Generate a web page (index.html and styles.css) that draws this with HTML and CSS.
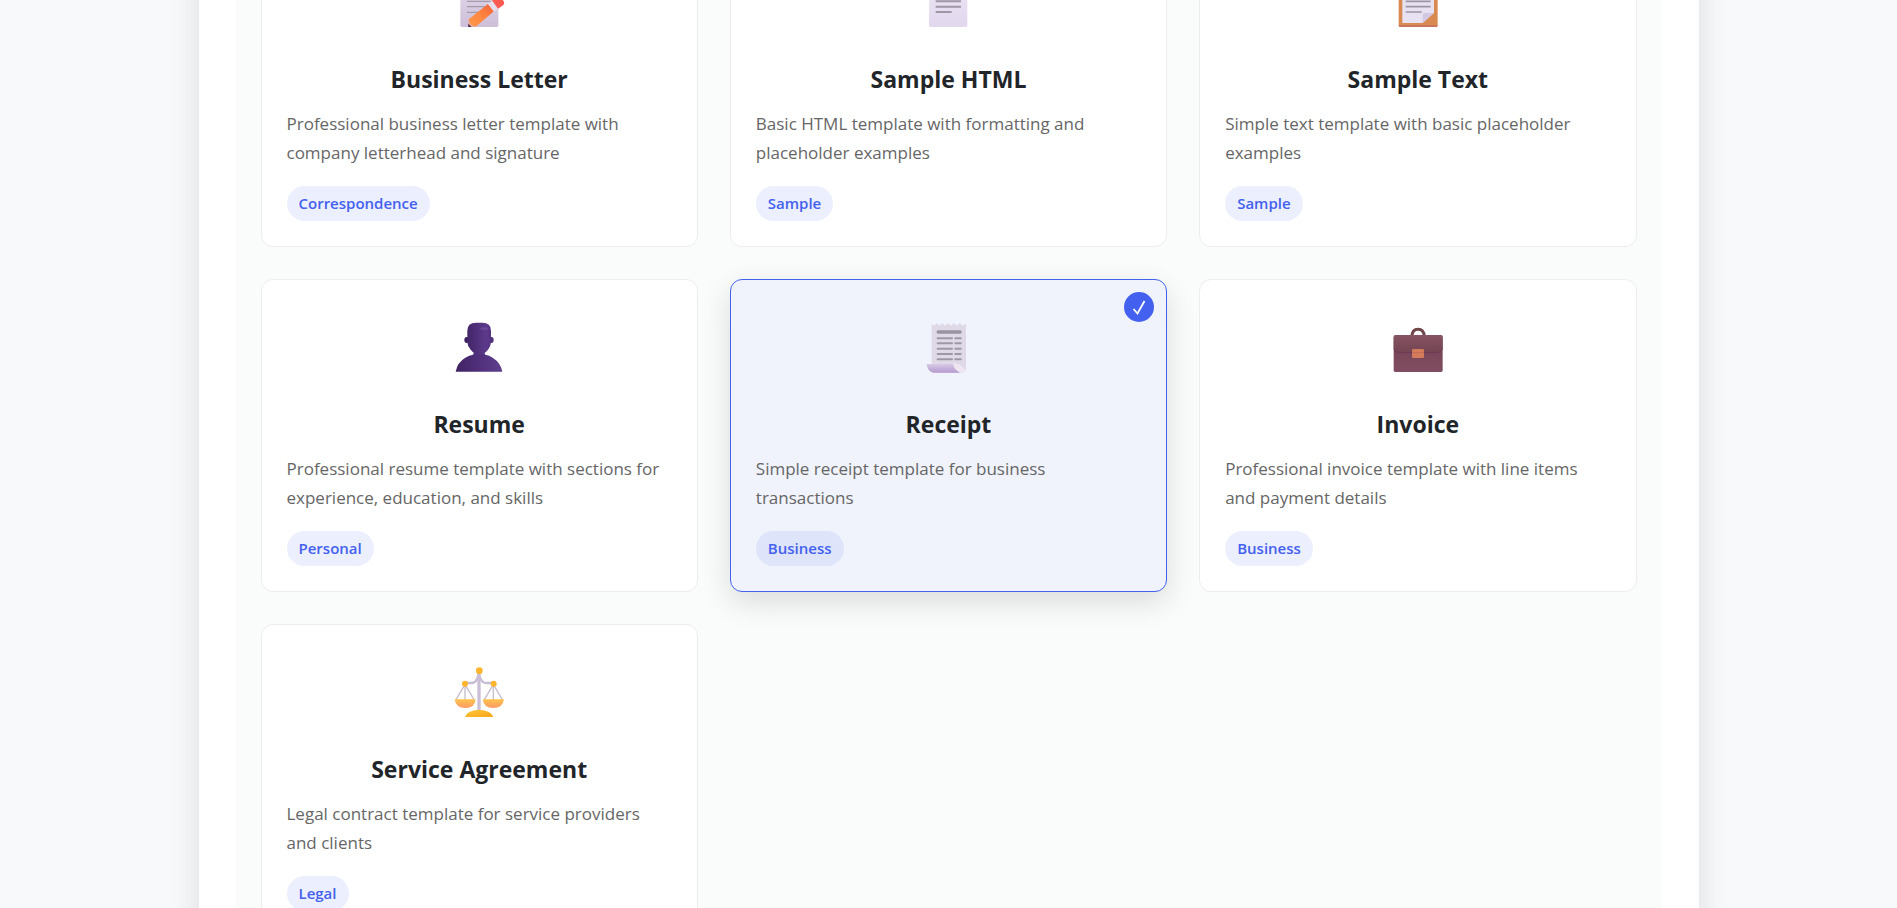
FILE: index.html
```html
<!DOCTYPE html>
<html lang="en">
<head>
<meta charset="utf-8">
<title>Templates</title>
<link rel="stylesheet" href="styles.css">
</head>
<body>
<main class="container">
<form class="template-grid" aria-label="Templates">

<label class="template-card">
<input class="card-radio" type="radio" name="template" value="letter">
<span class="card-icon"><svg viewBox="35 -75 168 168" aria-hidden="true">
<defs>
<linearGradient id="page" x1="0" y1="0" x2="0" y2="1"><stop offset="0" stop-color="#e4dcee"/><stop offset="1" stop-color="#cdbfd8"/></linearGradient>
<linearGradient id="pencil" x1="1" y1="0" x2="0" y2="1"><stop offset="0" stop-color="#f0603c"/><stop offset=".5" stop-color="#ff8540"/><stop offset="1" stop-color="#ff9c4c"/></linearGradient>
</defs>
<rect x="63" y="-66" width="114" height="147" rx="5" fill="url(#page)"/>
<path d="M83-45h74M83-29h74M83-12h74M83 4h74M83 20h58M83 37h38" stroke="#a29ba8" stroke-width="4"/>
<path d="M87 81l1-23 22 21z" fill="#e9a391"/><path d="M87 81v-10l9 10z" fill="#3f2145"/>
<path d="M88 58l58-46 18 22-55 46q-17-2-21-22z" fill="url(#pencil)"/>
<path d="M146 12l14-12 18 24-14 11z" fill="#e5ddec"/>
<path d="M158 1l14-11q9-4 15 5l6 9q4 7-2 12l-15 10z" fill="#fb5a50"/>
</svg></span>
<span class="card-title">Business Letter</span>
<span class="card-text">Professional business letter template with company letterhead and signature</span>
<span class="card-tag">Correspondence</span>
</label>

<label class="template-card">
<input class="card-radio" type="radio" name="template" value="html">
<span class="card-icon"><svg viewBox="31 -75 168 168" aria-hidden="true">
<defs><linearGradient id="sheet" x1="0" y1="0" x2="0" y2="1"><stop offset="0" stop-color="#eee8f5"/><stop offset="1" stop-color="#e2d7ee"/></linearGradient></defs>
<path d="M59-66h78l36 36V76q0 5-5 5H63q-5 0-5-5z" fill="url(#sheet)"/>
<path d="M137-66v36h36z" fill="#cbbcda"/>
<path d="M78-29h76M78-12h76M78 4h76M78 20h76M78 36h48" stroke="#9f96a6" stroke-width="6"/>
</svg></span>
<span class="card-title">Sample HTML</span>
<span class="card-text">Basic HTML template with formatting and placeholder examples</span>
<span class="card-tag">Sample</span>
</label>

<label class="template-card">
<input class="card-radio" type="radio" name="template" value="text">
<span class="card-icon"><svg viewBox="28 -75 168 168" aria-hidden="true">
<rect x="54" y="-66" width="117" height="147" rx="5" fill="#d98a50"/>
<path d="M54 76q0 5 5 5h107q5 0 5-5z" fill="#c67161"/>
<path d="M65-50h95v88l-34 31H65z" fill="#e8e1f2"/>
<path d="M126 69V44q0-5 5-5h29z" fill="#d3c8e1"/>
<path d="M75-29h75M75-12h75M75 4h75M75 20h75M75 36h48" stroke="#9c95a5" stroke-width="5"/>
<rect x="88" y="-74" width="50" height="20" rx="5" fill="#b4abc0"/>
</svg></span>
<span class="card-title">Sample Text</span>
<span class="card-text">Simple text template with basic placeholder examples</span>
<span class="card-tag">Sample</span>
</label>

<label class="template-card">
<input class="card-radio" type="radio" name="template" value="resume">
<span class="card-icon"><svg viewBox="35 30 168 168" aria-hidden="true">
<defs>
<linearGradient id="head" x1="0" y1="0" x2="1" y2="0"><stop offset="0" stop-color="#422567"/><stop offset=".8" stop-color="#5d3a8c"/><stop offset="1" stop-color="#54337f"/></linearGradient>
<linearGradient id="torso" x1="0" y1="0" x2="1" y2="0"><stop offset="0" stop-color="#402363"/><stop offset=".6" stop-color="#53327f"/><stop offset="1" stop-color="#60408c"/></linearGradient>
</defs>
<ellipse cx="82" cy="90" rx="7" ry="9" fill="#3c2160"/><ellipse cx="156" cy="90" rx="7" ry="9" fill="#50307b"/>
<path d="M49 185q5-28 29-42 12-8 23-9 3-4 3-9h31q0 5 3 9 12 1 22 9 24 15 29 42z" fill="url(#torso)"/>
<path d="M84 62q0-24 26-24h19q26 0 26 24v35q-1 14-9 22-12 15-26 15t-26-15q-9-8-10-22z" fill="url(#head)"/>
<ellipse cx="135" cy="56" rx="12" ry="4" fill="#7455a0" opacity=".6"/>
</svg></span>
<span class="card-title">Resume</span>
<span class="card-text">Professional resume template with sections for experience, education, and skills</span>
<span class="card-tag">Personal</span>
</label>

<label class="template-card selected">
<input class="card-radio" type="radio" name="template" value="receipt" checked>
<span class="check-badge"><svg viewBox="0 0 30 30" aria-hidden="true"><path d="M9.500 17l4 4.500L20.500 9" fill="none" stroke="#fff" stroke-width="1.800"/></svg></span>
<span class="card-icon"><svg viewBox="31 30 168 168" aria-hidden="true">
<defs><linearGradient id="roll" x1="0" y1="0" x2="0" y2="1"><stop offset="0" stop-color="#d8cbe5"/><stop offset=".5" stop-color="#c5b2da"/><stop offset="1" stop-color="#b59bd0"/></linearGradient></defs>
<path d="M66 41l7 6 8-7 8 7 9-7 8 7 9-7 9 7 9-7 8 7 9-7 9 7 10-6v133q0 14-13 14H66z" fill="#ded8e7"/>
<path d="M51 162h82q1 20 19 26H72q-19-3-21-26z" fill="url(#roll)"/>
<path d="M131 160q16-4 37 20-4 8-13 8-23-5-24-28z" fill="#eee7f2"/>
<path d="M86 66h65" stroke="#98939f" stroke-width="11" stroke-linecap="round"/>
<path d="M84 85h43M84 100h43M84 116h43M84 132h43M84 148h43M137 85h16M137 100h16M137 116h16M137 132h16M137 148h16" stroke="#9d98a4" stroke-width="6" stroke-linecap="round"/>
</svg></span>
<span class="card-title">Receipt</span>
<span class="card-text">Simple receipt template for business transactions</span>
<span class="card-tag">Business</span>
</label>

<label class="template-card">
<input class="card-radio" type="radio" name="template" value="invoice">
<span class="card-icon"><svg viewBox="28 30 168 168" aria-hidden="true">
<defs>
<linearGradient id="case" x1="0" y1="0" x2="0" y2="1"><stop offset="0" stop-color="#744252"/><stop offset="1" stop-color="#804d62"/></linearGradient>
<linearGradient id="flap" x1="0" y1="0" x2="0" y2="1"><stop offset="0" stop-color="#865463"/><stop offset="1" stop-color="#744452"/></linearGradient>
</defs>
<path d="M94 80q0-22 18-22t19 22" fill="none" stroke="#70474b" stroke-width="9"/>
<rect x="39" y="76" width="147" height="110" rx="5" fill="url(#case)"/>
<path d="M39 81q0-6 6-6h135q6 0 6 6v35q-5 12-18 12H57q-14 0-18-12z" fill="url(#flap)"/>
<path d="M39 116q4 12 18 12h111q13 0 18-12" fill="none" stroke="#653356" stroke-width="2"/>
<rect x="94" y="117" width="36" height="27" rx="4" fill="#d57c5a"/><path d="M94 128h36" stroke="#b9654d" stroke-width="2"/>
</svg></span>
<span class="card-title">Invoice</span>
<span class="card-text">Professional invoice template with line items and payment details</span>
<span class="card-tag">Business</span>
</label>

<label class="template-card">
<input class="card-radio" type="radio" name="template" value="agreement">
<span class="card-icon"><svg viewBox="35 30 168 168" aria-hidden="true">
<defs>
<linearGradient id="pan" x1="0" y1="0" x2="0" y2="1"><stop offset="0" stop-color="#ffc34a"/><stop offset="1" stop-color="#ff9a68"/></linearGradient>
<linearGradient id="base" x1="0" y1="0" x2="1" y2="1"><stop offset="0" stop-color="#ffc93c"/><stop offset="1" stop-color="#f9a41c"/></linearGradient>
</defs>
<path d="M77 91v44M162 91v44M77 88l-27 46M77 88l27 46M162 88l-27 46M162 88l27 46" stroke="#c9bdd0" stroke-width="4" fill="none"/>
<path d="M79 84h17q12 0 17-12l5-13 6 13q6 12 17 12h20" fill="none" stroke="#c8bbd5" stroke-width="7"/>
<path d="M114 52h10v114h-10z" fill="#cbbfd8"/>
<circle cx="120" cy="47" r="10" fill="#ffb52c"/><circle cx="77" cy="86" r="9" fill="#ffb52c"/><circle cx="163" cy="86" r="9" fill="#ffb52c"/>
<path d="M46 133h63q-2 26-31 26t-32-26zM130 133h64q-3 26-32 26t-32-26z" fill="url(#pan)"/>
<path d="M77 186q5-20 42-22 37 2 43 22z" fill="url(#base)"/>
</svg></span>
<span class="card-title">Service Agreement</span>
<span class="card-text">Legal contract template for service providers and clients</span>
<span class="card-tag">Legal</span>
</label>

</form>
</main>
</body>
</html>
```
FILE: styles.css
```css
* {
  box-sizing: border-box;
}

body {
  margin: 0;
  height: 100vh;
  overflow: hidden;
  background: #f8f9fb;
  color: #212529;
  font-family: "Segoe UI", "Open Sans", "Noto Sans", sans-serif;
}

.container {
  max-width: 1500px;
  margin: -92px auto 0;
  padding: 0 37px;
  background: #fff;
  box-shadow: 0 0 30px rgba(0, 0, 0, 0.12);
}

.template-grid {
  display: grid;
  grid-template-columns: repeat(auto-fill, minmax(350px, 1fr));
  gap: 32px;
  padding: 26px 25px;
  background: #fafcfb;
}

.template-card {
  position: relative;
  display: flex;
  flex-direction: column;
  padding: 25px;
  border: 1px solid #eceeee;
  border-radius: 12px;
  background: #fff;
  cursor: pointer;
}

.template-card.selected {
  border-color: #4361ee;
  background: #f0f3fb;
  box-shadow: 0 10px 30px rgba(0, 0, 0, 0.13);
}

.card-radio {
  position: absolute;
  opacity: 0;
  pointer-events: none;
}

.check-badge {
  position: absolute;
  top: 12px;
  right: 12px;
  width: 30px;
  height: 30px;
  border-radius: 50%;
  background: #4361ee;
}

.check-badge svg {
  display: block;
  width: 100%;
  height: 100%;
}

.card-icon {
  display: flex;
  align-items: center;
  justify-content: center;
  height: 86px;
  margin-bottom: 17px;
}

.card-icon svg {
  width: 56px;
  height: 56px;
}

.card-title {
  margin-bottom: 14px;
  font-size: 23px;
  font-weight: 700;
  line-height: 32px;
  text-align: center;
}

.card-text {
  margin-bottom: 19px;
  color: #666;
  font-size: 17px;
  line-height: 29px;
}

.card-tag {
  align-self: flex-start;
  padding: 5px 12px;
  border-radius: 18px;
  background: rgba(67, 97, 238, 0.1);
  color: #4361ee;
  font-size: 15px;
  font-weight: 600;
  line-height: 25px;
}
```
